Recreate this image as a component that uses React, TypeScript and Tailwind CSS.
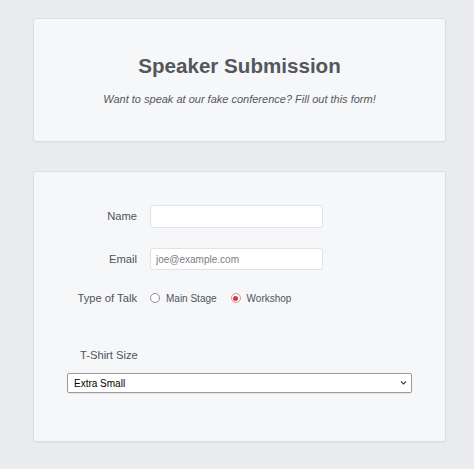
import { useState } from 'react';

export default function App() {
  const [talk, setTalk] = useState('workshop');

  return (
    <div className="min-h-screen bg-[#ebecef] pl-[33px] pr-[28px] pt-[18px] pb-[26px] font-['Liberation_Sans',Arial,sans-serif]">
      {/* Header card */}
      <div className="flex flex-col items-center rounded-[2px] border border-[#dcdde1] bg-[#f6f7f9] pt-[35px] pb-[35px] shadow-[0_1px_2px_rgba(0,0,0,0.04)]">
        <h1 className="text-[20.6px] leading-[24px] font-bold text-[#54575c]">Speaker Submission</h1>
        <p className="mt-[14px] text-[11px] leading-[14px] italic text-[#55585d]">
          Want to speak at our fake conference? Fill out this form!
        </p>
      </div>

      {/* Form card */}
      <div className="mt-[29px] rounded-[2px] border border-[#dcdde1] bg-[#f6f7f9] px-[33px] pt-[33px] pb-[48px] shadow-[0_1px_2px_rgba(0,0,0,0.04)]">
        <div className="grid grid-cols-[70px_1fr] items-center gap-x-[13px]">
          <label className="text-right text-[11.2px] text-[#505359]">Name</label>
          <input
            type="text"
            className="h-[23px] w-[173px] rounded-[3px] border border-[#e1e2e5] bg-white px-[5px] text-[10px] outline-none"
          />
        </div>

        <div className="mt-[20px] grid grid-cols-[70px_1fr] items-center gap-x-[13px]">
          <label className="text-right text-[11.2px] text-[#505359]">Email</label>
          <input
            type="email"
            placeholder="joe@example.com"
            className="h-[22px] w-[173px] rounded-[3px] border border-[#e1e2e5] bg-white px-[5px] text-[10px] text-[#333] outline-none placeholder:text-[#7b7e83]"
          />
        </div>

        <div className="mt-[20px] grid h-[16px] grid-cols-[70px_1fr] items-center gap-x-[13px]">
          <span className="text-right text-[11.2px] whitespace-nowrap text-[#505359]">Type of Talk</span>
          <div className="flex items-center">
            <button type="button" onClick={() => setTalk('main')} className="flex items-center">
              <span
                className={
                  talk === 'main'
                    ? 'flex h-[10px] w-[10px] items-center justify-center rounded-full border border-[#e58a8a] bg-white'
                    : 'flex h-[10px] w-[10px] items-center justify-center rounded-full border border-[#8c8f94] bg-white'
                }
              >
                {talk === 'main' && <span className="h-[5px] w-[5px] rounded-full bg-[#d9363e]" />}
              </span>
              <span className="ml-[6px] text-[10px] text-[#505359]">Main Stage</span>
            </button>
            <button type="button" onClick={() => setTalk('workshop')} className="ml-[14px] flex items-center">
              <span
                className={
                  talk === 'workshop'
                    ? 'flex h-[10px] w-[10px] items-center justify-center rounded-full border border-[#e58a8a] bg-white'
                    : 'flex h-[10px] w-[10px] items-center justify-center rounded-full border border-[#8c8f94] bg-white'
                }
              >
                {talk === 'workshop' && <span className="h-[5px] w-[5px] rounded-full bg-[#d9363e]" />}
              </span>
              <span className="ml-[6px] text-[10px] text-[#505359]">Workshop</span>
            </button>
          </div>
        </div>

        <div className="mt-[42px] pl-[13px] text-[11.2px] leading-[14px] text-[#505359]">T-Shirt Size</div>

        <div className="relative mt-[11px] h-[20px]">
          <select className="block h-[20px] w-full appearance-none rounded-[2px] border border-[#9b9b9b] bg-white pl-[6px] text-[10px] text-black outline-none shadow-[0_1px_1px_rgba(0,0,0,0.08)]">
            <option>Extra Small</option>
            <option>Small</option>
            <option>Medium</option>
            <option>Large</option>
            <option>Extra Large</option>
          </select>
          <svg
            className="pointer-events-none absolute right-[5px] top-[7px] h-[6px] w-[7px]"
            viewBox="0 0 7 6"
            fill="none"
            stroke="#444"
            strokeWidth="1.2"
          >
            <path d="M1 1.5 L3.5 4 L6 1.5" />
          </svg>
        </div>
      </div>
    </div>
  );
}
